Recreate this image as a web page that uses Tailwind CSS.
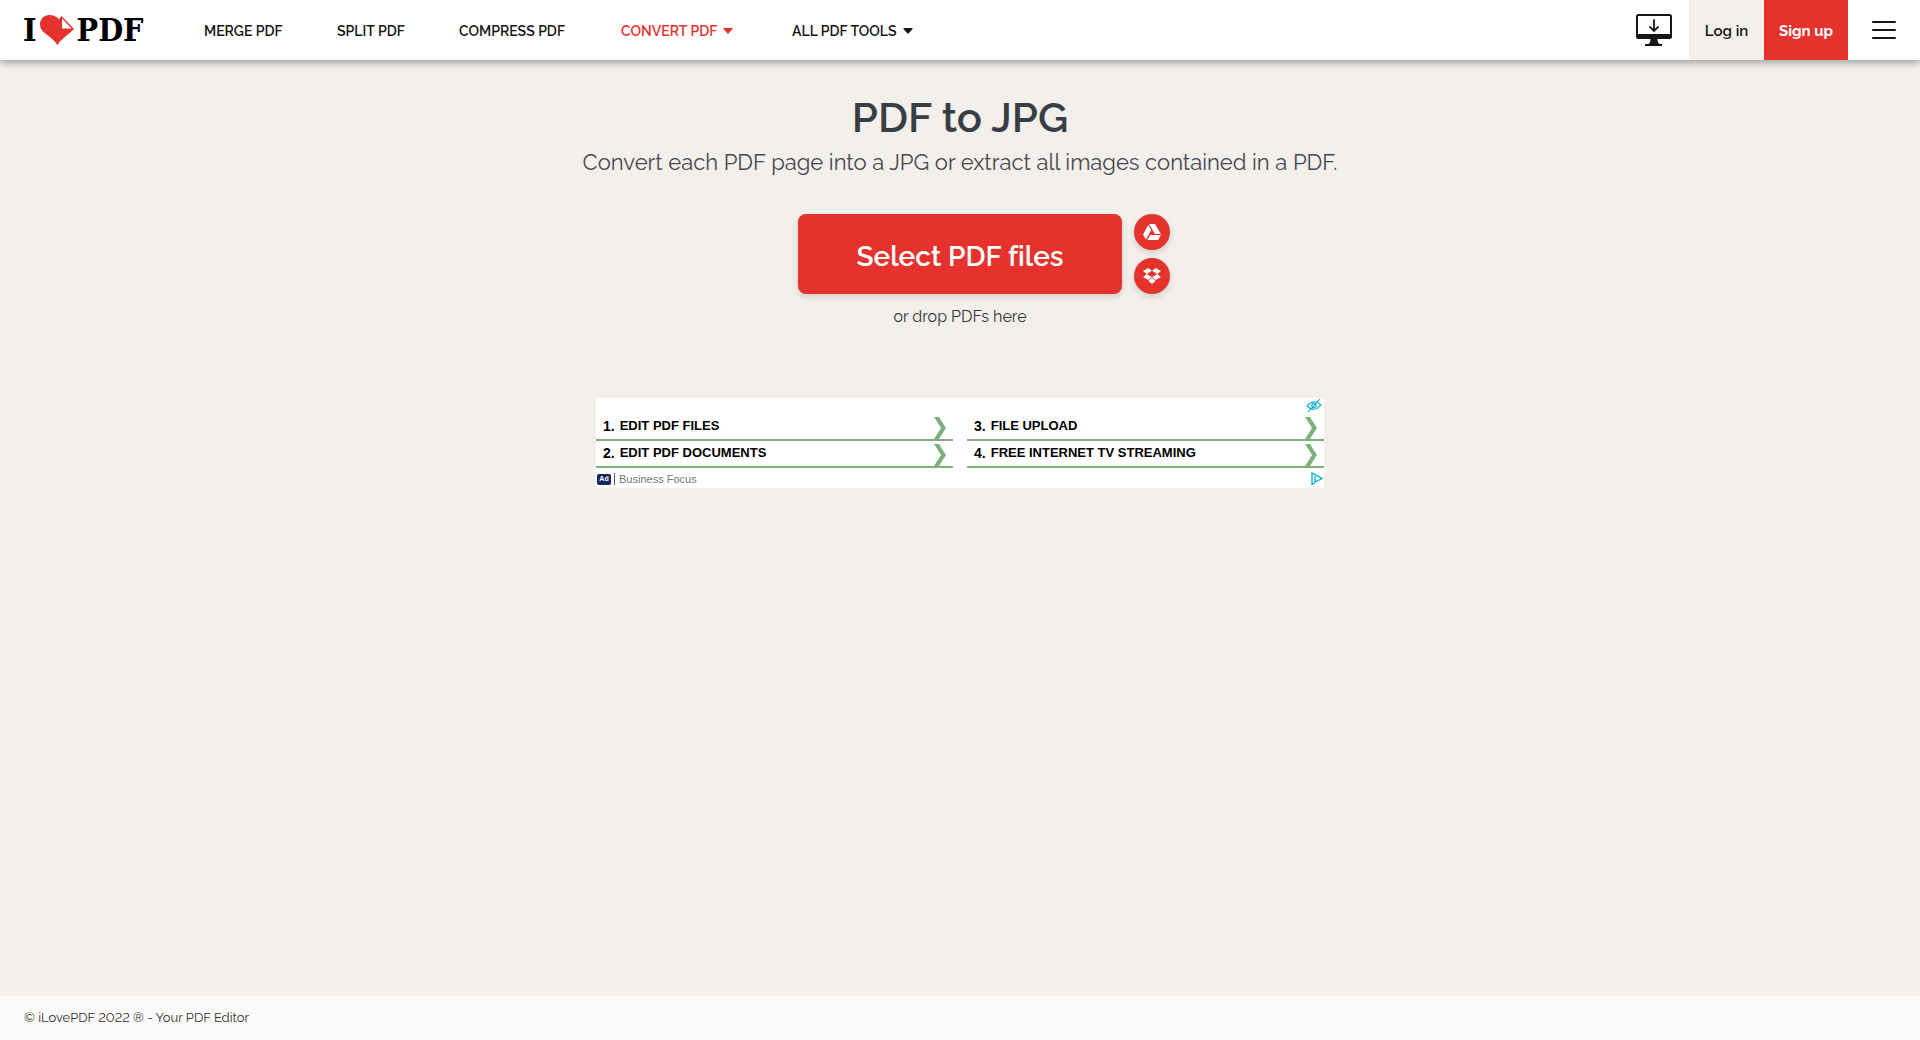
<!DOCTYPE html>
<html lang="en">
<head>
<meta charset="utf-8">
<meta name="viewport" content="width=device-width, initial-scale=1">
<title>PDF to JPG</title>
<script src="https://cdn.jsdelivr.net/npm/@tailwindcss/browser@4"></script>
</head>
<body class="flex min-h-screen flex-col bg-[#f3f0ec] font-['Raleway','Lato',sans-serif] text-[#161616]">
<header class="relative z-10 flex h-15 items-stretch bg-white shadow-[0_2px_8px_rgba(0,0,0,0.4)]">
  <a href="#" aria-label="I love PDF" class="flex w-45 items-center pl-[23px] font-['DejaVu_Serif_Condensed','DejaVu_Serif',serif] text-[32px] font-bold leading-none text-black">
    <span>I</span>
    <svg class="ml-1 h-[30px] w-[34px] shrink-0" viewBox="0 0 34 30" aria-hidden="true">
      <path fill="#e5322d" d="M17.500 30C14 24.500 9 21.500 4 17.500 1.500 15.500 0 12.500 0 9.500 0 4 4 0 9.500 0c4 0 7.500 1.500 9.300 4.500L21.500 1 34 14C28.500 19.500 21 24 17.500 30z"/>
      <path fill="#fff" d="M22 3.500v10h9.500z"/>
    </svg>
    <span class="ml-0.5">PDF</span>
  </a>
  <nav class="ml-6 grid grid-cols-[133px_122px_162px_171px_auto] items-center pt-0.5 text-sm font-semibold">
    <a href="#">MERGE PDF</a>
    <a href="#">SPLIT PDF</a>
    <a href="#">COMPRESS PDF</a>
    <a href="#" class="flex items-center gap-1.5 text-[#e5322d]">CONVERT PDF <svg class="h-1.5 w-2.5" viewBox="0 0 10 6" fill="currentColor"><path d="M1 0h8q1 0 .5 1L5.500 5.500q-.5.500-1 0L.5 1Q0 0 1 0z"/></svg></a>
    <a href="#" class="flex items-center gap-1.5">ALL PDF TOOLS <svg class="h-1.5 w-2.5" viewBox="0 0 10 6" fill="currentColor"><path d="M1 0h8q1 0 .5 1L5.500 5.500q-.5.500-1 0L.5 1Q0 0 1 0z"/></svg></a>
  </nav>
  <div class="ml-auto flex items-stretch text-[15px]">
    <a href="#" aria-label="Desktop app" class="flex items-center px-[17px]">
      <svg class="h-8 w-9" viewBox="0 0 36 32"><path fill="#161616" fill-rule="evenodd" d="M2.500 0h31Q36 0 36 2.500v20Q36 25 33.500 25H21.500q0 4 2 5h2.500v2H9v-2h3.500q2-1 2-5H2.500Q0 25 0 22.500v-20Q0 0 2.500 0zM2 2v18h32V2z"/><path fill="none" stroke="#161616" stroke-width="1.800" stroke-linecap="round" d="M18 6v11M14 13l4 4 4-4"/></svg>
    </a>
    <a href="#" class="flex w-[75px] items-center justify-center bg-[#f3f0ec] pt-0.5 font-semibold">Log in</a>
    <a href="#" class="flex w-21 items-center justify-center bg-[#e5322d] pt-0.5 font-bold text-white">Sign up</a>
    <button type="button" aria-label="Menu" class="flex w-18 items-center justify-center"><svg class="h-[18px] w-6" viewBox="0 0 24 18" stroke="#161616" stroke-width="2" stroke-linecap="round"><path d="M1 1h22M1 9h22M1 17h22"/></svg></button>
  </div>
</header>
<main class="flex flex-1 flex-col items-center pt-8 text-center">
  <h1 class="text-[42px] font-semibold leading-[52px] text-[#383e45]">PDF to JPG</h1>
  <p class="mt-0.5 text-[22px] leading-8 text-[#47474f]">Convert each PDF page into a JPG or extract all images contained in a PDF.</p>
  <div class="relative mt-9">
    <button type="button" class="h-20 w-81 rounded-lg bg-[#e5322d] pt-1.5 text-[28px] font-semibold text-white shadow-[0_3px_6px_rgba(0,0,0,0.14)] [font-variant-ligatures:none]">Select PDF files</button>
    <div class="absolute top-0 left-full ml-3 flex flex-col gap-2">
      <button type="button" aria-label="Google Drive" class="flex size-9 items-center justify-center rounded-full bg-[#e5322d] shadow-[0_3px_6px_rgba(0,0,0,0.14)]"><svg class="h-4 w-[18px]" viewBox="0 0 18 16" fill="#fff"><path d="M6 0h6l6 10h-6zM5.300 1l3 5L3 15.500 0 10.500zM7.300 11H18l-3 5H4.300z"/></svg></button>
      <button type="button" aria-label="Dropbox" class="flex size-9 items-center justify-center rounded-full bg-[#e5322d] shadow-[0_3px_6px_rgba(0,0,0,0.14)]"><svg class="h-4 w-[18px]" viewBox="0 0 18 16" fill="#fff"><path d="M5.300 0 9 2.700 3.700 6 0 3zM12.700 0 18 3l-3.700 3L9 2.700zM0 9l3.700-3L9 9.300 5.300 12zM18 9l-3.700-3L9 9.300l3.700 2.700zM9 10l3.700 2.800L9 16l-3.700-3.200z"/></svg></button>
    </div>
  </div>
  <p class="mt-3 text-base leading-[22px] text-[#333333]">or drop PDFs here</p>
  <section aria-label="Advertisement" class="relative mt-[70px] h-[90px] w-182 bg-white pt-4 text-left font-['Liberation_Sans',sans-serif]">
    <ol class="grid grid-flow-col grid-cols-2 grid-rows-2 gap-x-3.5 text-[13px] font-bold leading-6 text-black">
      <li class="flex h-[27px] items-center gap-[5px] border-b-2 border-[#7fb17f] pb-0.5 pl-[7px]"><span class="text-sm">1.</span><a href="#">EDIT PDF FILES</a><svg class="mt-1 mr-[7px] ml-auto h-[22px] w-3" viewBox="0 0 12 22" fill="#7fb17f"><path d="M0 0h5l7 11-7 11H0l7-11z"/></svg></li>
      <li class="flex h-[27px] items-center gap-[5px] border-b-2 border-[#7fb17f] pb-0.5 pl-[7px]"><span class="text-sm">2.</span><a href="#">EDIT PDF DOCUMENTS</a><svg class="mt-1 mr-[7px] ml-auto h-[22px] w-3" viewBox="0 0 12 22" fill="#7fb17f"><path d="M0 0h5l7 11-7 11H0l7-11z"/></svg></li>
      <li class="flex h-[27px] items-center gap-[5px] border-b-2 border-[#7fb17f] pb-0.5 pl-[7px]"><span class="text-sm">3.</span><a href="#">FILE UPLOAD</a><svg class="mt-1 mr-[7px] ml-auto h-[22px] w-3" viewBox="0 0 12 22" fill="#7fb17f"><path d="M0 0h5l7 11-7 11H0l7-11z"/></svg></li>
      <li class="flex h-[27px] items-center gap-[5px] border-b-2 border-[#7fb17f] pb-0.5 pl-[7px]"><span class="text-sm">4.</span><a href="#">FREE INTERNET TV STREAMING</a><svg class="mt-1 mr-[7px] ml-auto h-[22px] w-3" viewBox="0 0 12 22" fill="#7fb17f"><path d="M0 0h5l7 11-7 11H0l7-11z"/></svg></li>
    </ol>
    <div class="mt-[3px] flex h-4 items-center pl-px text-[11px] text-[#777777]">
      <span class="flex h-[11px] w-3.5 items-center justify-center rounded-xs bg-[#14285a] text-[7px] font-bold text-white">Ad</span>
      <span class="ml-[3px] h-3 w-px bg-[#555577]"></span>
      <span class="ml-1">Business Focus</span>
    </div>
    <svg class="absolute top-px right-0.5 h-[13px] w-4" viewBox="0 0 16 13" fill="none" stroke="#00aecd" stroke-width="1.100"><path d="M1 7Q8-1 15 6q-7 8-14 1zM2 13 14 0"/><circle cx="8" cy="6.500" r="2.200"/></svg>
    <svg class="absolute right-px bottom-[3px] h-[13px] w-3" viewBox="0 0 12 13" fill="none" stroke="#00aecd" stroke-width="1.300"><path d="M4 11 1 12.300V1l10 5.500L4 10V4"/></svg>
  </section>
</main>
<footer class="flex h-11 items-center bg-[#fbfaf8] px-6 text-[13px] text-[#333333] [font-variant-numeric:lining-nums]">© iLovePDF 2022 ® - Your PDF Editor</footer>
</body>
</html>
